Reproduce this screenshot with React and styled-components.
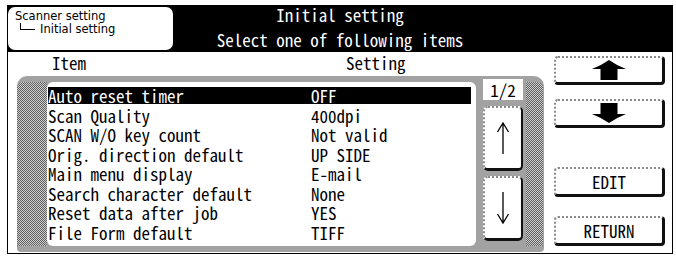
import React from 'react';
import styled, { createGlobalStyle } from 'styled-components';

const MONO = `"Noto Sans Mono CJK JP", "Noto Sans Mono CJK SC", "DejaVu Sans Mono", monospace`;

const Global = createGlobalStyle`
  html, body { margin: 0; padding: 0; background: #fff; }
  body { font-family: ${MONO}; color: #000; }
`;

const Screen = styled.div`
  width: 666px;
  margin: 5px 0 0 7px;
  display: flex;
  flex-direction: column;
`;

const TitleBar = styled.header`
  height: 47px;
  box-sizing: border-box;
  background: #000;
  padding: 2px 1px;
  display: grid;
  grid-template-columns: 165px 1fr 165px;
`;

const Breadcrumb = styled.div`
  background: #fff;
  border-radius: 7px;
  padding: 3px 0 0 7px;
  font: 11.5px "DejaVu Sans", sans-serif;
  line-height: 13px;
  color: #000;
`;

const CrumbLine = styled.div`
  display: flex;
  align-items: flex-start;
  white-space: nowrap;
`;

const Connector = styled.span`
  display: inline-block;
  width: 14px;
  height: 6px;
  margin: 0 5px 0 5px;
  border-left: 1px solid #000;
  border-bottom: 1px solid #000;
`;

const TitleText = styled.div`
  grid-column: 2;
  color: #fff;
  display: flex;
  flex-direction: column;
  align-items: center;
  gap: 9px;
  font-size: 17px;
  line-height: 16px;
  white-space: nowrap;
`;

const Panel = styled.main`
  height: 202px;
  box-sizing: border-box;
  border: 1px solid #000;
  border-top: none;
  padding: 0 7px 1px 9px;
  display: grid;
  grid-template-columns: 527px 111px;
  column-gap: 10px;
`;

const LeftColumn = styled.section`
  display: flex;
  flex-direction: column;
`;

const ColumnHeads = styled.div`
  height: 24px;
  display: grid;
  grid-template-columns: 294px 1fr;
  padding-left: 35px;
  font-size: 17px;
  line-height: 22px;
`;

const Frame = styled.div`
  flex: 1;
  background: #a2a2a2;
  border-radius: 10px 10px 4px 4px;
  padding: 3px 0 6px;
  display: flex;
`;

const Dither = styled.div`
  width: ${p => p.$w}px;
  margin-top: 3px;
  margin-left: ${p => p.$ml || 0}px;
  background: repeating-conic-gradient(#5e5e5e 0 25%, #cfcfcf 0 50%) 0 0 / 2px 2px;
  border-radius: ${p => p.$r || '0'};
`;

const ListArea = styled.div`
  width: 429px;
  box-sizing: border-box;
  margin-top: 3px;
  background: #fff;
  border-radius: 6px;
  padding: 5px 5px 0 1px;
  display: flex;
  flex-direction: column;
  gap: 2.5px;
`;

const Row = styled.div`
  height: 17px;
  display: grid;
  grid-template-columns: 263px 1fr;
  font-size: 17px;
  line-height: 17px;
  white-space: nowrap;
  background: ${p => (p.$selected ? '#000' : 'transparent')};
  color: ${p => (p.$selected ? '#fff' : '#000')};
`;

const ScrollColumn = styled.div`
  width: 40px;
  margin-left: 7px;
  display: flex;
  flex-direction: column;
`;

const PageBox = styled.div`
  height: 21px;
  background: #fff;
  display: flex;
  align-items: center;
  justify-content: center;
  font-size: 17px;
  line-height: 17px;
`;

const ScrollButton = styled.button`
  height: 65px;
  margin-top: ${p => p.$mt}px;
  box-sizing: border-box;
  background: #fff;
  border: 2px dotted #8a8a8a;
  border-right: 2px solid #111;
  border-bottom: 3px solid #111;
  border-radius: 5px;
  padding: 0;
  display: flex;
  align-items: center;
  justify-content: center;
`;

const RightColumn = styled.aside`
  display: flex;
  flex-direction: column;
`;

const Key = styled.button`
  height: ${p => p.$h}px;
  margin-top: ${p => p.$mt}px;
  box-sizing: border-box;
  background: #fff;
  border: 2px dotted #8a8a8a;
  border-right: 3px solid #111;
  border-bottom: 3px solid #111;
  border-radius: 4px;
  padding: 0;
  display: flex;
  align-items: center;
  justify-content: center;
  font: 17px ${MONO};
  line-height: 17px;
  color: #000;
`;

const BigArrow = ({ down }) => (
  <svg width="34" height="20" viewBox="0 0 34 20" style={down ? { transform: 'rotate(180deg)' } : undefined}>
    <path d="M17 0 Q24 5 34 9 L25.5 9 L25.5 20 L8.5 20 L8.5 9 L0 9 Q10 5 17 0 Z" fill="#000" />
  </svg>
);

const ThinArrow = ({ down }) => (
  <svg width="14" height="32" viewBox="0 0 14 32" style={down ? { transform: 'rotate(180deg)' } : undefined}>
    <path d="M7 1 L7 32 M1.5 10 L7 1 L12.5 10" fill="none" stroke="#000" strokeWidth="1.3" />
  </svg>
);

const rows = [
  ['Auto reset timer', 'OFF'],
  ['Scan Quality', '400dpi'],
  ['SCAN W/O key count', 'Not valid'],
  ['Orig. direction default', 'UP SIDE'],
  ['Main menu display', 'E-mail'],
  ['Search character default', 'None'],
  ['Reset data after job', 'YES'],
  ['File Form default', 'TIFF'],
];

export default function App() {
  return (
    <>
      <Global />
      <Screen>
        <TitleBar>
          <Breadcrumb>
            <CrumbLine>Scanner setting</CrumbLine>
            <CrumbLine>
              <Connector />
              Initial setting
            </CrumbLine>
          </Breadcrumb>
          <TitleText>
            <div>Initial setting</div>
            <div>Select one of following items</div>
          </TitleText>
        </TitleBar>
        <Panel>
          <LeftColumn>
            <ColumnHeads>
              <span>Item</span>
              <span>Setting</span>
            </ColumnHeads>
            <Frame>
              <Dither $w={30} $r="6px 0 0 0" />
              <ListArea>
                {rows.map(([item, value], i) => (
                  <Row key={item} $selected={i === 0}>
                    <span>{item}</span>
                    <span>{value}</span>
                  </Row>
                ))}
              </ListArea>
              <ScrollColumn>
                <PageBox>1/2</PageBox>
                <ScrollButton $mt={6} aria-label="Scroll up">
                  <ThinArrow />
                </ScrollButton>
                <ScrollButton $mt={5} aria-label="Scroll down">
                  <ThinArrow down />
                </ScrollButton>
              </ScrollColumn>
              <Dither $w={17} $ml={3} $r="0 6px 0 0" />
            </Frame>
          </LeftColumn>
          <RightColumn>
            <Key $h={29} $mt={4} aria-label="Up">
              <BigArrow />
            </Key>
            <Key $h={29} $mt={14} aria-label="Down">
              <BigArrow down />
            </Key>
            <Key $h={30} $mt={39}>EDIT</Key>
            <Key $h={30} $mt={19}>RETURN</Key>
          </RightColumn>
        </Panel>
      </Screen>
    </>
  );
}
